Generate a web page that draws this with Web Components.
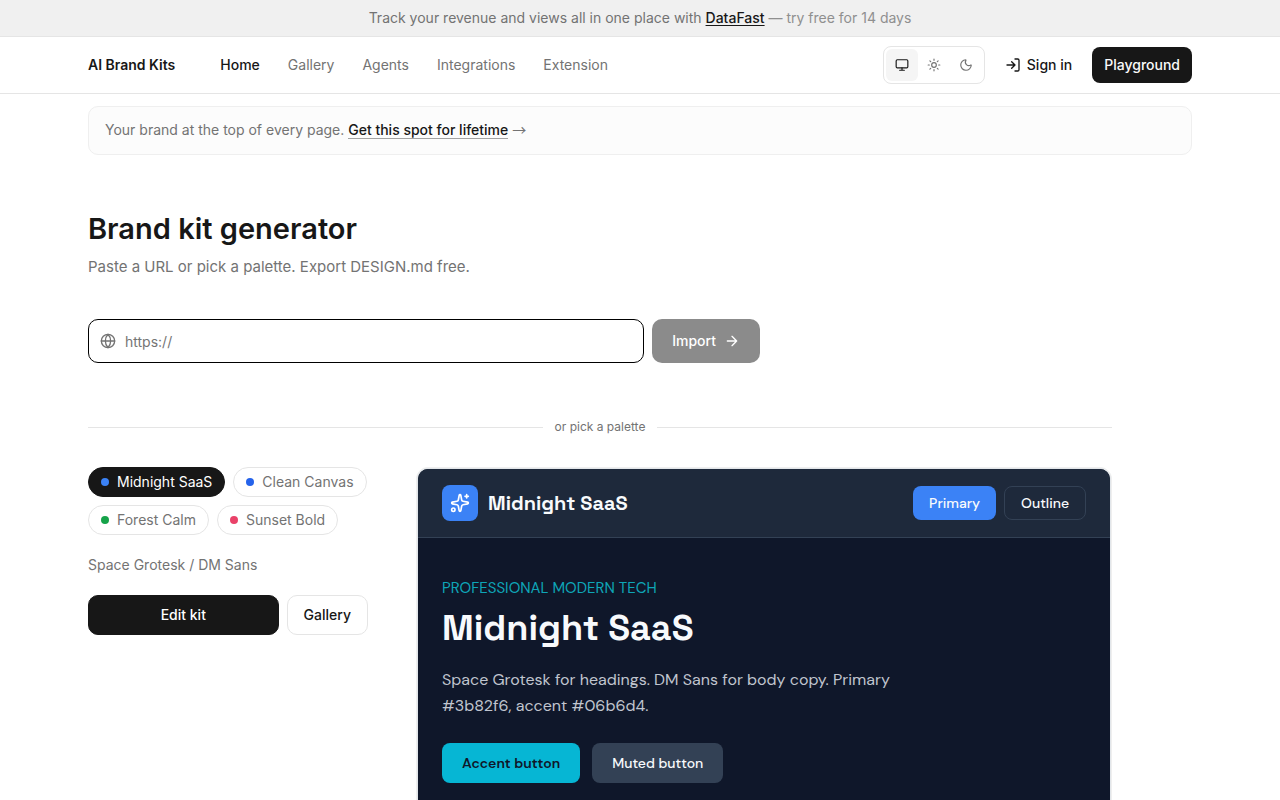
<!DOCTYPE html>
<html lang="en">
<head>
<meta charset="utf-8">
<meta name="viewport" content="width=device-width, initial-scale=1">
<title>AI Brand Kits</title>
<style>
  body { margin: 0; background: #fff; color: #171717; font: 14px/20px Inter, "Liberation Sans", sans-serif; }
</style>
</head>
<body>
<brand-app></brand-app>
<script>
const base = `
  *, *::before { box-sizing: border-box; }
  :host { display: block; }
  a { color: inherit; text-decoration: none; }
  button, input { font: inherit; color: inherit; margin: 0; }
  svg { display: block; flex: none; fill: none; stroke: currentColor; stroke-width: 2; stroke-linecap: round; stroke-linejoin: round; }
`;
const define = (name, css, html, setup) => customElements.define(name, class extends HTMLElement {
  constructor() {
    super();
    this.attachShadow({ mode: "open" }).innerHTML = `<style>${base}${css}</style>${html}`;
  }
  connectedCallback() { if (setup) setup(this, this.shadowRoot); }
});

const icons = {
  monitor: '<rect width="20" height="14" x="2" y="3" rx="2"/><path d="M8 21h8M12 17v4"/>',
  sun: '<circle cx="12" cy="12" r="4"/><path d="M12 2v2M12 20v2M4.93 4.93l1.41 1.41M17.66 17.66l1.41 1.41M2 12h2M20 12h2M6.34 17.66l-1.41 1.41M19.07 4.93l-1.41 1.41"/>',
  moon: '<path d="M20.985 12.486a9 9 0 1 1-9.473-9.472c.405-.022.617.46.402.803a6 6 0 0 0 8.268 8.268c.344-.215.825-.004.803.401"/>',
  login: '<path d="m10 17 5-5-5-5M15 12H3M15 3h4a2 2 0 0 1 2 2v14a2 2 0 0 1-2 2h-4"/>',
  globe: '<circle cx="12" cy="12" r="10"/><path d="M12 2a14.5 14.5 0 0 0 0 20 14.5 14.5 0 0 0 0-20M2 12h20"/>',
  arrow: '<path d="M5 12h14M12 5l7 7-7 7"/>',
  sparkles: '<path d="M11.017 2.814a1 1 0 0 1 1.966 0l1.051 5.558a2 2 0 0 0 1.594 1.594l5.558 1.051a1 1 0 0 1 0 1.966l-5.558 1.051a2 2 0 0 0-1.594 1.594l-1.051 5.558a1 1 0 0 1-1.966 0l-1.051-5.558a2 2 0 0 0-1.594-1.594l-5.558-1.051a1 1 0 0 1 0-1.966l5.558-1.051a2 2 0 0 0 1.594-1.594zM20 2v4M22 4h-4"/><circle cx="4" cy="20" r="2"/>'
};
define("ui-icon", `
  :host { flex: none; width: 16px; height: 16px; }
  svg { width: 100%; height: 100%; }
`, `<svg viewBox="0 0 24 24" aria-hidden="true"></svg>`, (el, root) => {
  root.querySelector("svg").innerHTML = icons[el.getAttribute("name")];
});

define("promo-bar", `
  :host { background: #f0f0f0; color: #737373; border-bottom: 1px solid #e5e5e5; padding: 8px 24px; text-align: center; }
  a { color: #171717; font-weight: 500; text-decoration: underline; text-underline-offset: 2px; }
  span { color: #8f8f8f; }
`, `Track your revenue and views all in one place with <a href="#">DataFast</a> <span>— try free for 14 days</span>`);

define("theme-switch", `
  fieldset { display: flex; margin: 0; padding: 2px; border: 1px solid #e5e5e5; border-radius: 8px; }
  button { display: grid; place-items: center; width: 32px; height: 32px; padding: 0; border: 0; border-radius: 6px; background: none; color: #737373; cursor: pointer; }
  button[aria-pressed="true"] { background: #f5f5f5; color: #171717; }
  ui-icon { width: 14px; height: 14px; }
`, `<fieldset aria-label="Theme">
  <button type="button" aria-label="System" aria-pressed="true"><ui-icon name="monitor"></ui-icon></button>
  <button type="button" aria-label="Light" aria-pressed="false"><ui-icon name="sun"></ui-icon></button>
  <button type="button" aria-label="Dark" aria-pressed="false"><ui-icon name="moon"></ui-icon></button>
</fieldset>`);

define("site-header", `
  :host { border-bottom: 1px solid #e5e5e5; }
  header { display: flex; align-items: center; max-width: 1152px; height: 56px; margin: 0 auto; padding: 0 24px; }
  .logo { font-weight: 600; margin-right: 45px; }
  nav { display: flex; gap: 28px; color: #737373; }
  nav [aria-current] { color: #171717; font-weight: 500; }
  .actions { display: flex; align-items: center; margin-left: auto; font-weight: 500; }
  .signin { display: flex; align-items: center; gap: 6px; padding: 0 20px; }
  .play { padding: 8px 12px; border-radius: 8px; background: #171717; color: #fafafa; }
`, `<header>
  <a class="logo" href="#">AI Brand Kits</a>
  <nav><a href="#" aria-current="page">Home</a><a href="#">Gallery</a><a href="#">Agents</a><a href="#">Integrations</a><a href="#">Extension</a></nav>
  <div class="actions"><theme-switch></theme-switch><a class="signin" href="#"><ui-icon name="login"></ui-icon>Sign in</a><a class="play" href="#">Playground</a></div>
</header>`);

define("sponsor-strip", `
  :host { border: 1px solid #efefef; border-radius: 10px; background: #fcfcfc; color: #737373; padding: 13px 16px 14px; }
  a { color: #171717; font-weight: 500; border-bottom: 1px solid #a3a3a3; }
  span { font-family: "Noto Sans CJK JP", sans-serif; line-height: 16px; }
`, `Your brand at the top of every page. <a href="#">Get this spot for lifetime</a> <span>→</span>`);

define("url-import", `
  form { display: flex; gap: 8px; max-width: 672px; }
  .field { flex: 1; display: flex; align-items: center; gap: 9px; height: 44px; padding: 0 11px; border: 1px solid #000; border-radius: 10px; color: #737373; }
  input { flex: 1; min-width: 0; padding: 2px 0 0; border: 0; outline: 0; background: none; }
  input::placeholder { color: #757575; opacity: 1; }
  button { display: flex; align-items: center; gap: 8px; padding: 0 20px; border: 0; border-radius: 10px; background: #8b8b8b; color: #fff; font-weight: 500; }
`, `<form>
  <label class="field"><ui-icon name="globe"></ui-icon><input type="url" placeholder="https://" aria-label="Website URL"></label>
  <button type="submit" disabled>Import<ui-icon name="arrow"></ui-icon></button>
</form>`);

define("text-divider", `
  :host { display: flex; align-items: center; gap: 12px; color: #737373; font-size: 12px; line-height: 16px; }
  i { flex: 1; height: 1px; background: #e5e5e5; }
`, `<i></i><slot></slot><i></i>`);

define("palette-chip", `
  button { display: flex; align-items: center; gap: 8px; height: 30px; padding: 0 12px; border: 1px solid #e5e5e5; border-radius: 15px; background: #fff; color: #737373; cursor: pointer; }
  button::before { content: ""; width: 8px; height: 8px; border-radius: 50%; background: var(--dot); }
  :host([selected]) button { background: #171717; border-color: #171717; color: #fff; }
`, `<button type="button"><slot></slot></button>`);

define("palette-picker", `
  .chips { display: flex; flex-wrap: wrap; gap: 8px; }
  p { margin: 20px 0; color: #737373; }
  .row { display: flex; gap: 8px; }
  .row a { display: grid; place-items: center; height: 40px; padding: 0 16px; border: 1px solid #e5e5e5; border-radius: 10px; font-weight: 500; }
  .row .edit { flex: 1; background: #171717; border-color: #171717; color: #fff; }
`, `<div class="chips">
  <palette-chip selected style="--dot:#3b82f6">Midnight SaaS</palette-chip>
  <palette-chip style="--dot:#2563eb">Clean Canvas</palette-chip>
  <palette-chip style="--dot:#16a34a">Forest Calm</palette-chip>
  <palette-chip style="--dot:#e94269">Sunset Bold</palette-chip>
</div>
<p>Space Grotesk / DM Sans</p>
<div class="row"><a class="edit" href="#">Edit kit</a><a href="#">Gallery</a></div>`);

define("kit-preview", `
  :host { border: 1px solid #efefef; border-radius: 12px; padding: 1px; background: #e2e6ea; font-family: "DM Sans", "Open Sans", sans-serif; color: #f8fafc; }
  article { border-radius: 10px; overflow: hidden; background: #0f172a; }
  header { display: flex; align-items: center; gap: 10px; height: 69px; padding: 0 24px; background: #1e293b; border-bottom: 1px solid #334155; }
  .mark { display: grid; place-items: center; width: 36px; height: 36px; border-radius: 8px; background: #3b82f6; color: #fff; }
  .mark ui-icon { width: 20px; height: 20px; }
  strong, h2 { font-family: "Space Grotesk", Inter, sans-serif; font-weight: 700; }
  strong { font-size: 20px; line-height: 28px; flex: 1; }
  button { border: 0; border-radius: 8px; font-weight: 500; }
  .acts, .cta { display: flex; }
  .acts { gap: 8px; }
  .acts button { height: 34px; padding: 0 16px; background: #3b82f6; }
  .acts .outline { background: none; border: 1px solid #334155; }
  section { padding: 40px 24px 48px; }
  .eyebrow { margin: 0; color: #0ea5b7; font-size: 15px; line-height: 20px; }
  h2 { margin: 8px 0 16px; font-size: 36px; line-height: 45px; }
  .copy { max-width: 480px; margin: 0 0 24px; font-size: 16px; line-height: 26px; color: #c0c5cf; }
  .cta { gap: 12px; }
  .cta button { height: 40px; padding: 0 20px; background: #334155; }
  .cta .accent { background: #06b6d4; color: #0f172a; font-weight: 600; }
`, `<article>
  <header><span class="mark"><ui-icon name="sparkles"></ui-icon></span><strong>Midnight SaaS</strong>
    <div class="acts"><button type="button">Primary</button><button type="button" class="outline">Outline</button></div></header>
  <section>
    <p class="eyebrow">PROFESSIONAL MODERN TECH</p>
    <h2>Midnight SaaS</h2>
    <p class="copy">Space Grotesk for headings. DM Sans for body copy. Primary #3b82f6, accent #06b6d4.</p>
    <div class="cta"><button type="button" class="accent">Accent button</button><button type="button">Muted button</button></div>
  </section>
</article>`);

define("brand-app", `
  .page { max-width: 1152px; margin: 0 auto; padding: 12px 24px 64px; }
  main { max-width: 1024px; padding-top: 56px; }
  h1 { margin: 0; font-size: 29px; line-height: 36px; font-weight: 600; }
  .sub { margin: 8px 0 40px; font-size: 15px; line-height: 24px; color: #737373; }
  text-divider { margin: 56px 0 32px; }
  .work { display: grid; grid-template-columns: 280px minmax(0, 1fr); gap: 48px; align-items: start; }
`, `<promo-bar></promo-bar><site-header></site-header>
<div class="page">
  <sponsor-strip></sponsor-strip>
  <main>
    <h1>Brand kit generator</h1>
    <p class="sub">Paste a URL or pick a palette. Export DESIGN.md free.</p>
    <url-import></url-import>
    <text-divider>or pick a palette</text-divider>
    <div class="work"><palette-picker></palette-picker><kit-preview></kit-preview></div>
  </main>
</div>`);
</script>
</body>
</html>
